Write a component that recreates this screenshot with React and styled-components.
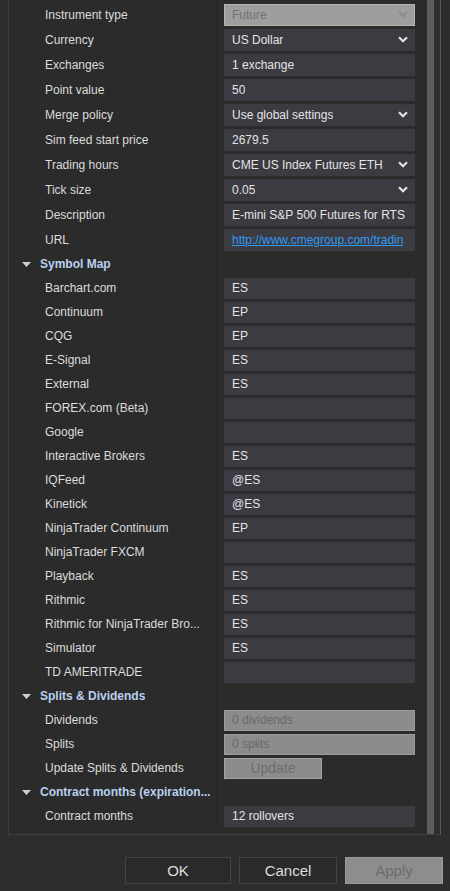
import React from 'react'
import styled, { createGlobalStyle } from 'styled-components'

const GlobalStyle = createGlobalStyle`
  html, body {
    margin: 0;
    padding: 0;
    background: #2d2d2d;
  }
  body {
    font-family: "Liberation Sans", Arial, sans-serif;
    font-size: 12px;
  }
`

const general = [
  { label: 'Instrument type', value: 'Future', kind: 'locked', combo: true },
  { label: 'Currency', value: 'US Dollar', combo: true },
  { label: 'Exchanges', value: '1 exchange' },
  { label: 'Point value', value: '50' },
  { label: 'Merge policy', value: 'Use global settings', combo: true },
  { label: 'Sim feed start price', value: '2679.5' },
  { label: 'Trading hours', value: 'CME US Index Futures ETH', combo: true },
  { label: 'Tick size', value: '0.05', combo: true },
  { label: 'Description', value: 'E-mini S&P 500 Futures for RTS' },
  { label: 'URL', value: 'http://www.cmegroup.com/tradin', kind: 'link' },
]

const sections = [
  {
    title: 'Symbol Map',
    rows: [
      { label: 'Barchart.com', value: 'ES' },
      { label: 'Continuum', value: 'EP' },
      { label: 'CQG', value: 'EP' },
      { label: 'E-Signal', value: 'ES' },
      { label: 'External', value: 'ES' },
      { label: 'FOREX.com (Beta)', value: '' },
      { label: 'Google', value: '' },
      { label: 'Interactive Brokers', value: 'ES' },
      { label: 'IQFeed', value: '@ES' },
      { label: 'Kinetick', value: '@ES' },
      { label: 'NinjaTrader Continuum', value: 'EP' },
      { label: 'NinjaTrader FXCM', value: '' },
      { label: 'Playback', value: 'ES' },
      { label: 'Rithmic', value: 'ES' },
      { label: 'Rithmic for NinjaTrader Bro...', value: 'ES' },
      { label: 'Simulator', value: 'ES' },
      { label: 'TD AMERITRADE', value: '' },
    ],
  },
  {
    title: 'Splits & Dividends',
    rows: [
      { label: 'Dividends', value: '0 dividends', kind: 'disabled' },
      { label: 'Splits', value: '0 splits', kind: 'disabled' },
      { label: 'Update Splits & Dividends', value: 'Update', kind: 'button' },
    ],
  },
  {
    title: 'Contract months (expiration...',
    rows: [{ label: 'Contract months', value: '12 rollovers' }],
  },
]

const Chevron = ({ color }) => (
  <svg width="10" height="7" viewBox="0 0 10 7">
    <polyline points="1,1.2 5,5.2 9,1.2" fill="none" stroke={color} strokeWidth="2.2" />
  </svg>
)

const Expander = () => (
  <svg width="9" height="5" viewBox="0 0 9 5">
    <polygon points="0,0 9,0 4.5,5" fill="#d0d0d0" />
  </svg>
)

const Field = ({ row, height }) => {
  if (row.kind === 'button') return <UpdateButton $h={height}>{row.value}</UpdateButton>
  return (
    <ValueBox $h={height} $kind={row.kind}>
      {row.kind === 'link' ? <Link>{row.value}</Link> : <ValueText>{row.value}</ValueText>}
      {row.combo && <Chevron color={row.kind === 'locked' ? '#8a8a8a' : '#e2e2e2'} />}
    </ValueBox>
  )
}

const PropertyRow = ({ row, height }) => (
  <Row $h={height}>
    <Label>{row.label}</Label>
    <ValueCell>
      <Field row={row} height={height - 3} />
    </ValueCell>
  </Row>
)

const App = () => {
  return (
    <Dialog>
      <GlobalStyle />
      <Panel>
        <Grid>
          {general.map(r => <PropertyRow key={r.label} row={r} height={25} />)}
          {sections.map(s => (
            <React.Fragment key={s.title}>
              <Row $h={24}>
                <Header>
                  <Expander />
                  <HeaderText>{s.title}</HeaderText>
                </Header>
                <ValueCell />
              </Row>
              {s.rows.map(r => <PropertyRow key={r.label} row={r} height={24} />)}
            </React.Fragment>
          ))}
        </Grid>
        <ScrollTrack>
          <Thumb />
        </ScrollTrack>
      </Panel>
      <Footer>
        <DialogButton $w={106}>OK</DialogButton>
        <DialogButton $w={98}>Cancel</DialogButton>
        <DialogButton $w={98} $disabled>Apply</DialogButton>
      </Footer>
    </Dialog>
  )
}

export default App

const Dialog = styled.div`
  width: 450px;
  height: 891px;
  background: #2d2d2d;
  display: flex;
  flex-direction: column;
  overflow: hidden;
`

const Panel = styled.div`
  margin: 0 9px 0 8px;
  height: 834px;
  display: flex;
  border-left: 1px solid #3e3e3e;
  border-bottom: 1px solid #3e3e3e;
  border-right: 1px solid #585858;
  background: #2b2b2b;
`

const Grid = styled.div`
  flex: 1;
  min-width: 0;
  padding-top: 2px;
  display: flex;
  flex-direction: column;
`

const Row = styled.div`
  display: grid;
  grid-template-columns: 208px 1fr;
  height: ${p => p.$h}px;
`

const Label = styled.div`
  padding: 0 6px 0 36px;
  border-right: 1px solid #242424;
  color: #dcdcdc;
  display: flex;
  align-items: center;
  white-space: nowrap;
  overflow: hidden;
`

const Header = styled.div`
  display: flex;
  align-items: center;
  gap: 9px;
  padding-left: 13px;
  padding-right: 6px;
  border-right: 1px solid #242424;
  min-width: 0;
`

const HeaderText = styled.span`
  font-weight: bold;
  color: #b9d0f0;
  white-space: nowrap;
  overflow: hidden;
`

const ValueCell = styled.div`
  display: flex;
  align-items: center;
  min-width: 0;
  padding: 0 12px 0 7px;
`

const ValueBox = styled.div`
  flex: 1;
  min-width: 0;
  height: ${p => p.$h}px;
  box-sizing: border-box;
  display: flex;
  align-items: center;
  justify-content: space-between;
  padding: 0 6px 0 7px;
  overflow: hidden;
  background: ${p => (p.$kind === 'locked' ? '#9e9e9e' : p.$kind === 'disabled' ? '#8c8c8c' : '#3c3b41')};
  border: 1px solid ${p => (p.$kind === 'locked' ? '#b4b4b4' : p.$kind === 'disabled' ? '#9c9c9c' : '#3c3b41')};
  color: ${p => (p.$kind === 'locked' ? '#727272' : p.$kind === 'disabled' ? '#6a6a6a' : '#e4e4e4')};
`

const ValueText = styled.span`
  min-width: 0;
  white-space: nowrap;
  overflow: hidden;
`

const Link = styled.span`
  min-width: 0;
  color: #2f9af2;
  text-decoration: underline;
  white-space: nowrap;
  overflow: hidden;
`

const UpdateButton = styled.div`
  width: 98px;
  height: ${p => p.$h}px;
  box-sizing: border-box;
  background: #8c8c8c;
  border: 1px solid #a2a2a2;
  color: #6c6c6c;
  font-size: 14px;
  display: flex;
  align-items: center;
  justify-content: center;
`

const ScrollTrack = styled.div`
  width: 13px;
  background: #2e2e2e;
  display: flex;
`

const Thumb = styled.div`
  width: 7px;
  background: #5c5c5c;
`

const Footer = styled.div`
  display: flex;
  justify-content: flex-end;
  gap: 8px;
  padding: 22px 7px 0 0;
`

const DialogButton = styled.div`
  width: ${p => p.$w}px;
  height: 27px;
  box-sizing: border-box;
  display: flex;
  align-items: center;
  justify-content: center;
  font-size: 15px;
  background: ${p => (p.$disabled ? '#8d8d8d' : '#2a2a2a')};
  border: 1px solid ${p => (p.$disabled ? '#9a9a9a' : '#444444')};
  color: ${p => (p.$disabled ? '#6c6c6c' : '#dedede')};
`
